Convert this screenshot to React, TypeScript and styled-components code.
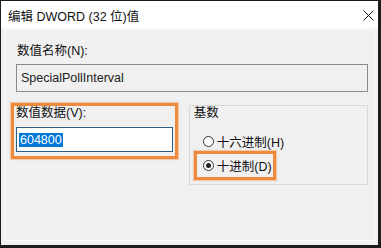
import styled, { createGlobalStyle } from "styled-components";

const GlobalStyle = createGlobalStyle`
  html, body {
    margin: 0;
    padding: 0;
    background: #f0f0f0;
  }
  * {
    box-sizing: border-box;
  }
`;

const Dialog = styled.div`
  width: 381px;
  height: 248px;
  background: #f0f0f0;
  border-style: solid;
  border-color: #1c1c1c;
  border-width: 1px 3px 3px 1px;
  font-family: "Liberation Sans", "Noto Sans CJK SC", sans-serif;
  font-size: 12px;
  color: #111;
  display: flex;
  flex-direction: column;
  overflow: hidden;
`;

const TitleBar = styled.div`
  height: 29px;
  flex: 0 0 29px;
  background: linear-gradient(#ffffff 85%, #f6f6f6);
  display: flex;
  align-items: center;
  justify-content: space-between;
  padding: 0 0 1px 7px;
  font-size: 12.5px;
`;

const CloseButton = styled.div`
  width: 20px;
  height: 20px;
  display: flex;
  align-items: center;
  justify-content: center;
`;

const Body = styled.div`
  flex: 1;
  padding: 13px 6px 0 10px;
  display: flex;
  flex-direction: column;
  border-left: 1px solid #fafafa;
  border-right: 1px solid #fafafa;
  border-bottom: 1px solid #fafafa;
  margin: 0 3px 4px 4px;
`;

const Label = styled.div<{ $indent?: number; $h?: number }>`
  height: ${(p) => p.$h ?? 16}px;
  line-height: ${(p) => p.$h ?? 16}px;
  padding-left: ${(p) => p.$indent ?? 1}px;
  font-size: 12.5px;
  white-space: nowrap;
`;

const NameBox = styled.div`
  margin-top: 5px;
  height: 28px;
  border: 1px solid #8a8a8a;
  background: #f0f0f0;
  padding-left: 4px;
  display: flex;
  align-items: center;
  font-size: 12.5px;
  color: #222;
`;

const Row = styled.div`
  display: flex;
  align-items: flex-start;
  margin-top: 11px;
  margin-left: -5px;
`;

const Highlight = styled.div<{ $w: number; $h: number }>`
  width: ${(p) => p.$w}px;
  height: ${(p) => p.$h}px;
  border: 3px solid #ef8a3c;
  box-shadow: 0 0 1px 1px rgba(239, 138, 60, 0.35);
`;

const DataFrame = styled(Highlight)`
  padding: 0 2px;
  display: flex;
  flex-direction: column;
`;

const ValueBox = styled.div`
  margin-top: 7px;
  height: 25px;
  border: 1px solid #2d5f86;
  background: #fff;
  padding-left: 2px;
  display: flex;
  align-items: center;
`;

const Selected = styled.span`
  display: inline-block;
  background: #0078d7;
  color: #fff;
  height: 14px;
  line-height: 14px;
  padding: 0 1px;
  font-size: 12.5px;
`;

const GroupBox = styled.div`
  margin-left: 11px;
  margin-top: 2px;
  width: 184px;
  height: 80px;
  border: 1px solid #d9d9d9;
  display: flex;
  flex-direction: column;
`;

const GroupLabel = styled.div`
  height: 14px;
  line-height: 14px;
  padding-left: 4px;
  margin-bottom: 11px;
  font-size: 12.5px;
`;

const RadioRow = styled.div<{ $pad: number }>`
  display: flex;
  align-items: center;
  gap: 3px;
  padding-left: ${(p) => p.$pad}px;
  height: 20px;
  font-size: 12.5px;
  white-space: nowrap;
`;

const RadioFrame = styled(Highlight)`
  margin-left: 4px;
  display: flex;
  align-items: center;
`;

const Circle = styled.span<{ $checked?: boolean }>`
  width: 11px;
  height: 11px;
  border-radius: 50%;
  border: 1px solid #333;
  background: #fff;
  display: flex;
  align-items: center;
  justify-content: center;
  flex: 0 0 11px;
  &::after {
    content: "";
    display: ${(p) => (p.$checked ? "block" : "none")};
    width: 5px;
    height: 5px;
    border-radius: 50%;
    background: #222;
  }
`;

export default function App() {
  return (
    <>
      <GlobalStyle />
      <Dialog>
        <TitleBar>
          <span>编辑 DWORD (32 位)值</span>
          <CloseButton>
            <svg width="11" height="11" viewBox="0 0 11 11">
              <path d="M0.5 0.5 L10.5 10.5 M10.5 0.5 L0.5 10.5" stroke="#111" strokeWidth="1" />
            </svg>
          </CloseButton>
        </TitleBar>
        <Body>
          <Label>数值名称(N):</Label>
          <NameBox>SpecialPollInterval</NameBox>
          <Row>
            <DataFrame $w={171} $h={56}>
              <Label $indent={0} $h={14}>
                数值数据(V):
              </Label>
              <ValueBox>
                <Selected>604800</Selected>
              </ValueBox>
            </DataFrame>
            <GroupBox>
              <GroupLabel>基数</GroupLabel>
              <RadioRow $pad={13}>
                <Circle />
                <span>十六进制(H)</span>
              </RadioRow>
              <RadioFrame $w={82} $h={29}>
                <RadioRow $pad={6}>
                  <Circle $checked />
                  <span>十进制(D)</span>
                </RadioRow>
              </RadioFrame>
            </GroupBox>
          </Row>
        </Body>
      </Dialog>
    </>
  );
}
